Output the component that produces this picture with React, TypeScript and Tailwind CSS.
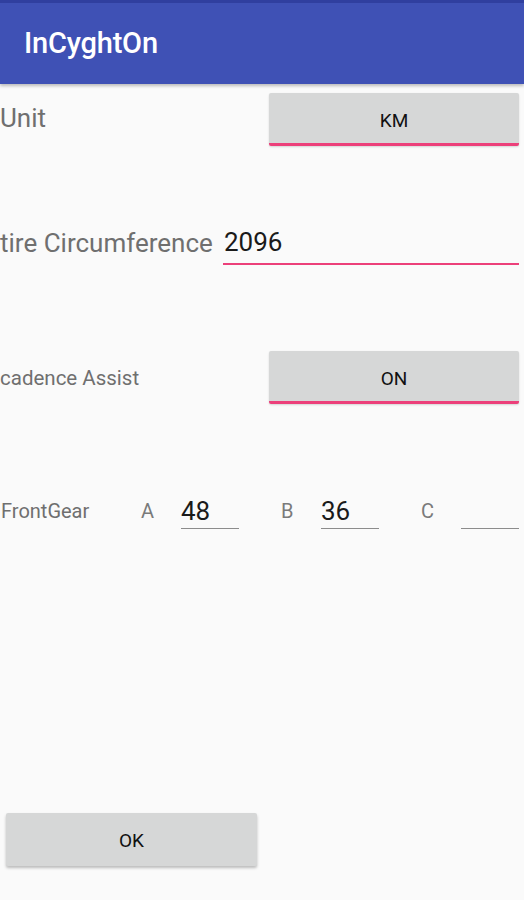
import React from 'react';

const font = { fontFamily: 'Roboto, "Noto Sans", sans-serif' };

function ToggleButton({ label }: { label: string }) {
  return (
    <button className="w-[250px] h-[53px] mr-[5px] bg-[#D6D7D7] rounded-[2px] border-b-[3px] border-[#EC407A] shadow-[0_1px_2px_rgba(0,0,0,0.15)] text-[19px] font-normal text-[#111] flex items-center justify-center pt-[6px]">
      {label}
    </button>
  );
}

function GearField({ letter, value }: { letter: string; value: string }) {
  return (
    <>
      <span className="w-[40px] text-[20px] text-[#7a7a7a]">{letter}</span>
      <div className="w-[58px] h-full border-b-[1.5px] border-[#8c8c8c] flex items-center text-[26px] text-[#1a1a1a] pt-[1px]">
        {value}
      </div>
    </>
  );
}

export default function App() {
  return (
    <div className="w-[524px] h-[900px] bg-[#FAFAFA] flex flex-col overflow-hidden" style={font}>
      {/* App bar */}
      <header className="h-[84px] bg-[#3F51B5] border-t-[3px] border-[#303F9F] shadow-[0_2px_3px_rgba(0,0,0,0.25)] flex items-center pl-[24px] shrink-0">
        <h1 className="text-[29px] font-medium text-white tracking-[-0.2px] mt-[1px]">InCyghtOn</h1>
      </header>

      {/* Unit */}
      <div className="mt-[9px] h-[53px] flex items-center">
        <span className="flex-1 text-[26px] text-[#6f6f6f] -mt-[3px]">Unit</span>
        <ToggleButton label="KM" />
      </div>

      {/* Tire circumference */}
      <div className="mt-[73px] h-[46px] flex items-center">
        <span className="w-[223px] text-[26px] text-[#6f6f6f] whitespace-nowrap pt-[3px]">tire Circumference</span>
        <div className="w-[296px] h-full border-b-2 border-[#EC407A] flex items-center text-[26px] text-[#1a1a1a] pl-[1px] pt-[3px]">
          2096
        </div>
      </div>

      {/* Cadence assist */}
      <div className="mt-[86px] h-[53px] flex items-center">
        <span className="flex-1 text-[20.5px] text-[#6f6f6f] pt-[2px]">cadence Assist</span>
        <ToggleButton label="ON" />
      </div>

      {/* Front gear */}
      <div className="mt-[89px] h-[36px] flex items-center">
        <span className="w-[141px] pl-[1px] text-[20px] text-[#6f6f6f]">FrontGear</span>
        <GearField letter="A" value="48" />
        <span className="w-[42px]" />
        <GearField letter="B" value="36" />
        <span className="w-[42px]" />
        <GearField letter="C" value="" />
      </div>

      <div className="flex-1" />

      {/* OK */}
      <div className="pl-[6px] mb-[34px]">
        <button className="w-[251px] h-[53px] bg-[#D6D7D7] rounded-[2px] shadow-[0_2px_3px_rgba(0,0,0,0.25)] text-[19px] font-normal text-[#111] flex items-center justify-center pt-[3px]">
          OK
        </button>
      </div>
    </div>
  );
}
